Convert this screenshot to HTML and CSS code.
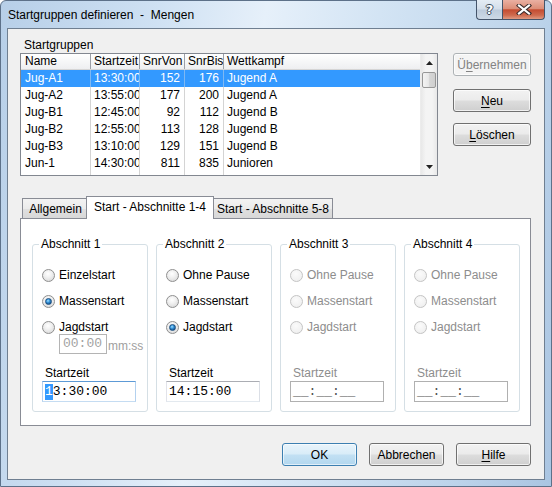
FILE: index.html
```html
<!DOCTYPE html>
<html>
<head>
<meta charset="utf-8">
<link rel="stylesheet" href="styles.css">
</head>
<body>
<div class="window">
  <div class="titlebar">
    <span class="title">Startgruppen definieren &nbsp;-&nbsp; Mengen</span>
    <div class="capbtns">
      <div class="cbtn help">?</div>
      <div class="cbtn close">
        <svg width="16" height="11" viewBox="0 0 16 11"><path d="M3 1.5 L13 9.5 M13 1.5 L3 9.5" stroke="#3a2a2a" stroke-width="4.2" stroke-linecap="square"/><path d="M3 1.5 L13 9.5 M13 1.5 L3 9.5" stroke="#fff" stroke-width="2.2" stroke-linecap="square"/></svg>
      </div>
    </div>
  </div>
  <div class="client">
    <div class="top">
      <div class="listcol">
        <div class="caption">Startgruppen</div>
        <div class="listview">
          <div class="lv-main">
            <div class="lv-row lv-head">
              <div>Name</div><div>Startzeit</div><div>SnrVon</div><div>SnrBis</div><div>Wettkampf</div>
            </div>
            <div class="lv-row sel">
              <div>Jug-A1</div><div>13:30:00</div><div class="num">152</div><div class="num">176</div><div>Jugend A</div>
            </div>
            <div class="lv-row">
              <div>Jug-A2</div><div>13:55:00</div><div class="num">177</div><div class="num">200</div><div>Jugend A</div>
            </div>
            <div class="lv-row">
              <div>Jug-B1</div><div>12:45:00</div><div class="num">92</div><div class="num">112</div><div>Jugend B</div>
            </div>
            <div class="lv-row">
              <div>Jug-B2</div><div>12:55:00</div><div class="num">113</div><div class="num">128</div><div>Jugend B</div>
            </div>
            <div class="lv-row">
              <div>Jug-B3</div><div>13:10:00</div><div class="num">129</div><div class="num">151</div><div>Jugend B</div>
            </div>
            <div class="lv-row">
              <div>Jun-1</div><div>14:30:00</div><div class="num">811</div><div class="num">835</div><div>Junioren</div>
            </div>
            <div class="lv-row lv-fill">
              <div></div><div></div><div></div><div></div><div></div>
            </div>
          </div>
          <div class="vscroll">
            <div class="sarrow"><svg width="7" height="4" viewBox="0 0 7 4"><path d="M0 4 L3.5 0 L7 4 Z" fill="#222"/></svg></div>
            <div class="thumb"></div>
            <div class="strack"></div>
            <div class="sarrow"><svg width="7" height="4" viewBox="0 0 7 4"><path d="M0 0 L7 0 L3.5 4 Z" fill="#222"/></svg></div>
          </div>
        </div>
      </div>
      <div class="sidebtns">
        <div class="btn disabled">Ü<u>b</u>ernehmen</div>
        <div class="btn b-neu"><u>N</u>eu</div>
        <div class="btn b-loe"><u>L</u>öschen</div>
      </div>
    </div>

    <div class="tabs">
      <div class="tab t1">Allgemein</div>
      <div class="tab active">Start - Abschnitte 1-4</div>
      <div class="tab t3">Start - Abschnitte 5-8</div>
    </div>
    <div class="panel">
      <div class="group">
        <div class="legend">Abschnitt 1</div>
        <div class="rrow first"><span class="radio"></span><span class="rlabel">Einzelstart</span></div>
        <div class="rrow"><span class="radio checked"><span class="dot"></span></span><span class="rlabel">Massenstart</span></div>
        <div class="rrow"><span class="radio"></span><span class="rlabel">Jagdstart</span></div>
        <div class="subrow"><span class="minibox">00:00</span><span class="unit">mm:ss</span></div>
        <div class="flabel">Startzeit</div>
        <div class="tbox focus"><span class="selchar">1</span>3:30:00</div>
      </div>
      <div class="group">
        <div class="legend">Abschnitt 2</div>
        <div class="rrow first"><span class="radio"></span><span class="rlabel">Ohne Pause</span></div>
        <div class="rrow"><span class="radio"></span><span class="rlabel">Massenstart</span></div>
        <div class="rrow"><span class="radio checked"><span class="dot"></span></span><span class="rlabel">Jagdstart</span></div>
        <div class="subrow"></div>
        <div class="flabel">Startzeit</div>
        <div class="tbox">14:15:00</div>
      </div>
      <div class="group dis">
        <div class="legend">Abschnitt 3</div>
        <div class="rrow first"><span class="radio"></span><span class="rlabel">Ohne Pause</span></div>
        <div class="rrow"><span class="radio"></span><span class="rlabel">Massenstart</span></div>
        <div class="rrow"><span class="radio"></span><span class="rlabel">Jagdstart</span></div>
        <div class="subrow"></div>
        <div class="flabel">Startzeit</div>
        <div class="tbox">__:__:__</div>
      </div>
      <div class="group dis">
        <div class="legend">Abschnitt 4</div>
        <div class="rrow first"><span class="radio"></span><span class="rlabel">Ohne Pause</span></div>
        <div class="rrow"><span class="radio"></span><span class="rlabel">Massenstart</span></div>
        <div class="rrow"><span class="radio"></span><span class="rlabel">Jagdstart</span></div>
        <div class="subrow"></div>
        <div class="flabel">Startzeit</div>
        <div class="tbox">__:__:__</div>
      </div>
    </div>

    <div class="bottombtns">
      <div class="btn default">OK</div>
      <div class="btn">Abbrechen</div>
      <div class="btn"><u>H</u>ilfe</div>
    </div>
  </div>
</div>
</body>
</html>
```

FILE: styles.css
```css
* { box-sizing: border-box; margin: 0; padding: 0; }
html, body { width: 552px; height: 487px; overflow: hidden; }
body {
  font-family: "Liberation Sans", Arial, sans-serif;
  font-size: 12px;
  color: #000;
  background: #fff;
}

.window {
  width: 552px;
  height: 487px;
  display: flex;
  flex-direction: column;
  border: 1px solid #5d7189;
  border-radius: 6px 6px 0 0;
  padding: 0 6px 6px 6px;
  background: linear-gradient(100deg, #b7cfe8 0%, #cfe1f3 25%, #e6f0fa 42%, #d3e4f4 60%, #bcd3ea 85%, #aac5e2 100%);
}

.titlebar {
  height: 27px;
  display: flex;
  align-items: center;
}
.title {
  padding-left: 1px;
  padding-top: 1px;
  white-space: pre;
}
.capbtns {
  display: flex;
  margin-left: auto;
  align-self: flex-start;
  margin-top: -1px;
}
.cbtn {
  height: 20px;
  border: 1px solid #44546a;
  border-top: none;
  display: flex;
  align-items: center;
  justify-content: center;
}
.help {
  width: 26px;
  border-right: none;
  border-radius: 0 0 0 4px;
  background: linear-gradient(#e4ecf4, #d3deea 48%, #bccbdc 52%, #cdd9e6);
  color: #fff;
  font-family: "DejaVu Sans", sans-serif;
  font-weight: bold;
  font-size: 13px;
  text-shadow: 1px 0 0 #3b4a5c, -1px 0 0 #3b4a5c, 0 1px 0 #3b4a5c, 0 -1px 0 #3b4a5c;
}
.close {
  width: 43px;
  border-radius: 0 0 4px 0;
  background: linear-gradient(#eab0a2, #dc8e78 45%, #c44c31 52%, #cf6a4e 80%, #e09a82);
}

.client {
  flex: 1;
  background: #f0f0f0;
  border: 1px solid #6f7f91;
  padding: 8px 13px 13px 12px;
  display: flex;
  flex-direction: column;
}

.top { display: flex; }
.listcol { width: 418px; }
.caption {
  line-height: 16px;
  padding-left: 4px;
}
.listview {
  height: 123px;
  border: 1px solid #828790;
  background: #fff;
  display: flex;
}
.lv-main {
  flex: 1;
  display: flex;
  flex-direction: column;
}
.lv-row {
  display: grid;
  grid-template-columns: 70px 49px 45px 39px 1fr;
  height: 17px;
  line-height: 17px;
}
.lv-row > div {
  border-right: 1px solid #d4d4d4;
  padding-left: 3px;
  white-space: nowrap;
  overflow: hidden;
}
.lv-row > div:first-child { padding-left: 4px; }
.lv-row > div:last-child { border-right: none; }
.lv-row > .num { text-align: right; padding-right: 4px; }
.lv-head {
  height: 16px;
  line-height: 15px;
  background: linear-gradient(#ffffff, #f6f7f8 50%, #eeeff1);
  border-bottom: 1px solid #d5d5d5;
}
.lv-head > div { border-right-color: #9da0a6; }
.lv-head > div:first-child { padding-left: 4px; }
.sel { background: #3399ff; color: #fff; }
.sel > div { border-right-color: #7fb8f2; }
.lv-fill { flex: 1; height: auto; }

.vscroll {
  width: 17px;
  display: flex;
  flex-direction: column;
  background: linear-gradient(90deg, #e8e8e8, #f4f4f4 30%, #f4f4f4 70%, #e8e8e8);
  border-left: 1px solid #ececec;
}
.sarrow {
  height: 17px;
  display: flex;
  align-items: center;
  justify-content: center;
}
.thumb {
  height: 16px;
  margin: 1px 1px 0 1px;
  border: 1px solid #979797;
  border-radius: 2px;
  background: linear-gradient(90deg, #f3f3f3, #e8e8e8 45%, #d6d6d6 55%, #cfcfcf);
}
.strack { flex: 1; }

.sidebtns {
  margin-left: 15px;
  margin-top: 16px;
  display: flex;
  flex-direction: column;
}
.btn {
  width: 78px;
  height: 23px;
  border: 1px solid #707070;
  border-radius: 3px;
  background: linear-gradient(#f2f2f2, #ebebeb 48%, #dddddd 52%, #cfcfcf);
  box-shadow: inset 0 0 0 1px rgba(255,255,255,0.7);
  display: flex;
  align-items: center;
  justify-content: center;
  line-height: 14px;
}
.btn u { text-decoration: underline; text-underline-offset: 2px; }
.btn.disabled {
  border-color: #adb2b5;
  background: #f4f4f4;
  color: #838383;
}
.b-neu { margin-top: 13px; }
.b-loe { margin-top: 11px; }

.tabs {
  display: flex;
  align-items: flex-end;
  margin-top: 20px;
  margin-bottom: -1px;
  padding-left: 2px;
  height: 23px;
}
.tab {
  height: 21px;
  border: 1px solid #898c95;
  background: linear-gradient(#f3f3f3, #ebebeb 50%, #e0e0e0 50%, #d8d8d8);
  display: flex;
  align-items: center;
  justify-content: center;
  white-space: nowrap;
  z-index: 1;
  padding-top: 1px;
}
.t1 { width: 66px; border-right: none; }
.t3 { width: 119px; margin-left: -2px; border-left: none; }
.tab.active {
  width: 128px;
  height: 23px;
  margin-left: -2px;
  margin-right: 0;
  background: #fff;
  border-bottom: none;
  z-index: 2;
  padding-top: 0;
  padding-bottom: 2px;
}
.t3 { margin-left: 0; }

.panel {
  height: 208px;
  border: 1px solid #898c95;
  background: #fff;
  padding: 25px 0 13px 11px;
  display: flex;
  gap: 8px;
}
.group {
  width: 116px;
  border: 1px solid #d5dfe5;
  border-radius: 3px;
  padding: 0 0 9px 9px;
  display: flex;
  flex-direction: column;
}
.legend {
  align-self: flex-start;
  margin: -9px 0 0 -3px;
  padding: 0 2px;
  background: #fff;
  line-height: 16px;
}
.rrow {
  height: 18px;
  display: flex;
  align-items: center;
  margin-top: 8px;
}
.rrow.first { margin-top: 14px; }
.radio {
  width: 13px;
  height: 13px;
  border-radius: 50%;
  border: 1px solid #8f8f8f;
  background: radial-gradient(circle at 45% 35%, #ffffff 0%, #f0f0f0 40%, #d2d2d2 100%);
  display: flex;
  align-items: center;
  justify-content: center;
  flex: none;
}
.dot {
  width: 7px;
  height: 7px;
  border-radius: 50%;
  background: radial-gradient(circle at 40% 35%, #a8e4ff 0%, #3d9be0 35%, #114f8c 80%);
  border: 1px solid #1c4f80;
}
.rlabel { margin-left: 4px; white-space: nowrap; }

.subrow {
  height: 20px;
  margin-top: -2px;
  margin-left: 17px;
  display: flex;
  align-items: center;
}
.minibox {
  width: 48px;
  height: 20px;
  border: 1px solid #b4b4b4;
  background: #fff;
  font-family: "Liberation Mono", "Courier New", monospace;
  font-size: 13px;
  color: #a3a3a3;
  padding-left: 3px;
  line-height: 18px;
}
.unit { color: #a0a0a0; margin-left: 1px; padding-top: 3px; }

.flabel {
  margin-top: 12px;
  line-height: 15px;
  padding-left: 3px;
}
.tbox {
  width: 94px;
  height: 21px;
  border: 1px solid #abadb3;
  border-left-color: #e2e3ea;
  border-right-color: #dbdfe6;
  border-bottom-color: #e3e9ef;
  background: #fff;
  font-family: "Liberation Mono", "Courier New", monospace;
  font-size: 13px;
  padding-left: 2px;
  display: flex;
  align-items: center;
  white-space: pre;
}
.tbox.focus {
  border-color: #5d9ad6;
  border-left-color: #b3d1ef;
  border-right-color: #b3d1ef;
  border-bottom-color: #c5dcf2;
}
.selchar {
  background: #3399ff;
  color: #fff;
  line-height: 16px;
  display: inline-block;
}
.dis .legend { color: #000; }
.dis .rlabel, .dis .flabel { color: #8d8d8d; }
.dis .radio {
  border-color: #c4c4c4;
  background: radial-gradient(circle at 45% 35%, #fbfbfb, #ececec);
}
.dis .tbox {
  border-color: #b0b0b0;
  color: #505050;
}

.bottombtns {
  display: flex;
  justify-content: flex-end;
  gap: 12px;
  margin-top: 17px;
}
.bottombtns .btn { width: 75px; }
.btn.default {
  border-color: #3c7fb1;
  background: linear-gradient(#e9f4fb, #d8ecf8 48%, #c2e0f3 52%, #b2d7ef);
  box-shadow: inset 0 0 0 1px rgba(255,255,255,0.6);
}
```
